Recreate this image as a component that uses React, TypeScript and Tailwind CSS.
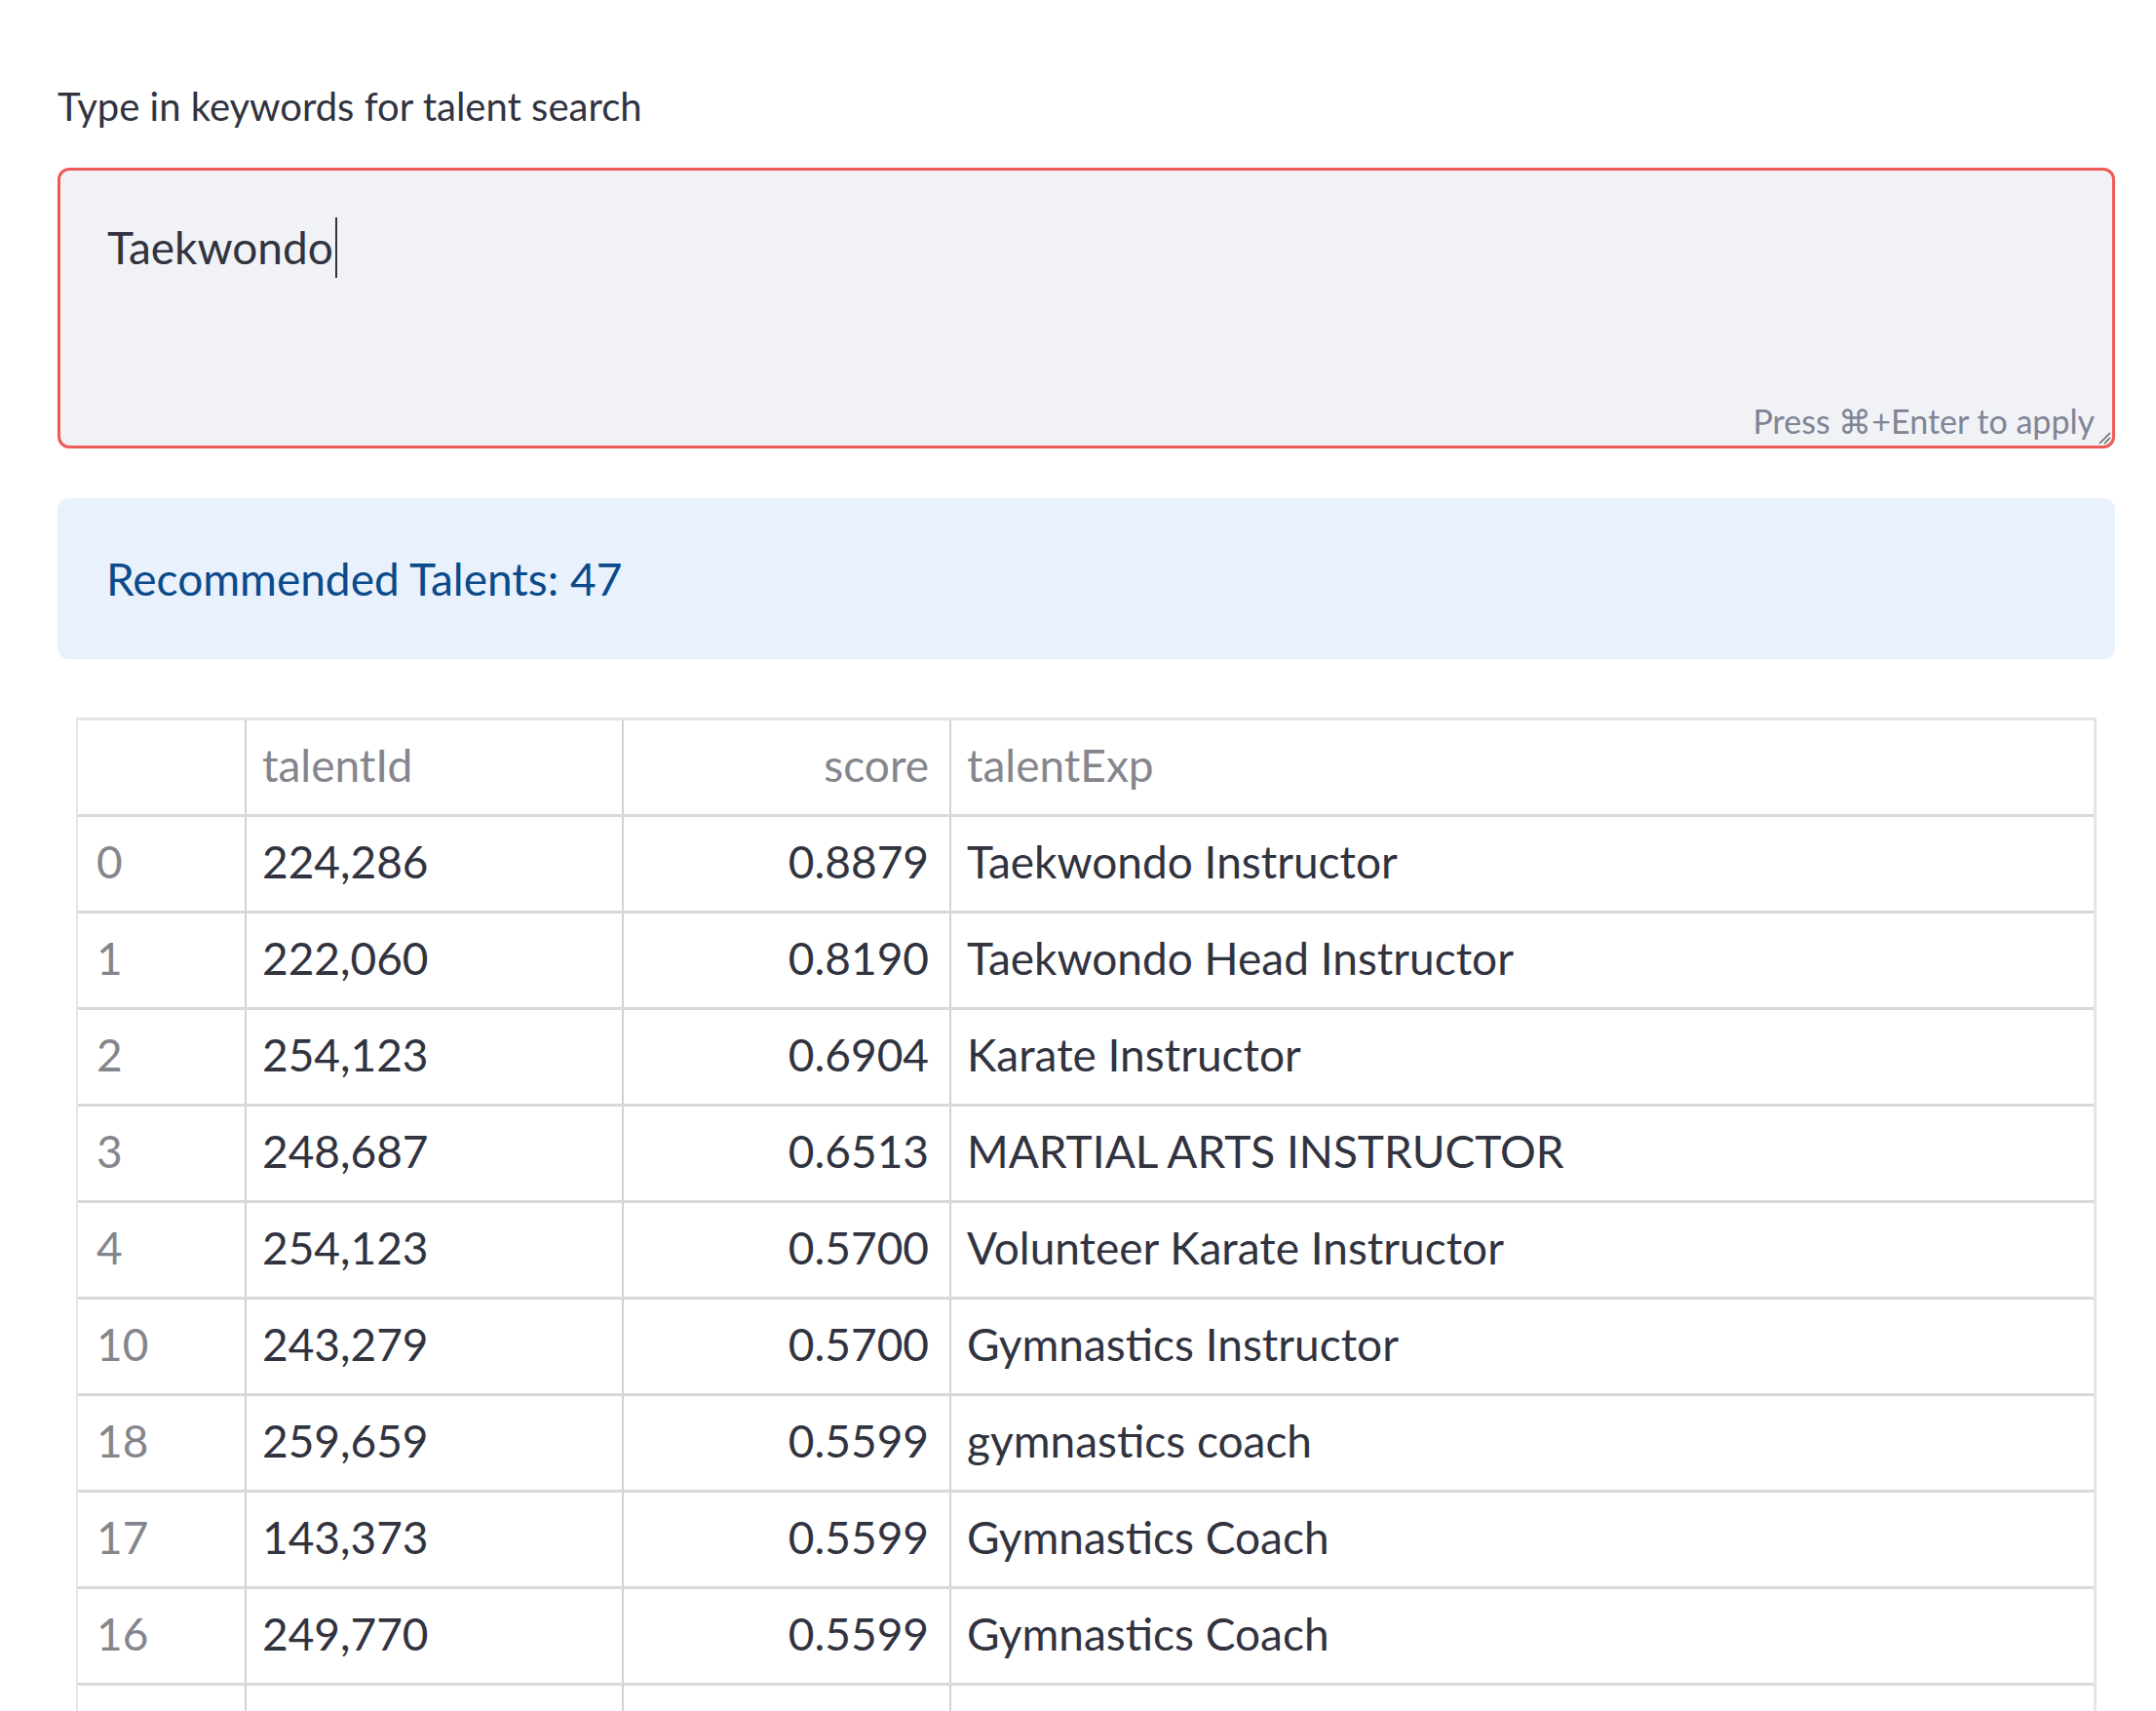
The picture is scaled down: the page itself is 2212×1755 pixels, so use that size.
const rows: [string, string, string, string][] = [
  ['0', '224,286', '0.8879', 'Taekwondo Instructor'],
  ['1', '222,060', '0.8190', 'Taekwondo Head Instructor'],
  ['2', '254,123', '0.6904', 'Karate Instructor'],
  ['3', '248,687', '0.6513', 'MARTIAL ARTS INSTRUCTOR'],
  ['4', '254,123', '0.5700', 'Volunteer Karate Instructor'],
  ['10', '243,279', '0.5700', 'Gymnastics Instructor'],
  ['18', '259,659', '0.5599', 'gymnastics coach'],
  ['17', '143,373', '0.5599', 'Gymnastics Coach'],
  ['16', '249,770', '0.5599', 'Gymnastics Coach'],
  // next row only shows its top edge at the bottom of the viewport
  ['', '', '', ''],
];

const cols = 'grid grid-cols-[171px_387px_336px_1fr]';

export default function App() {
  return (
    <div className="w-[2212px] min-h-[1755px] bg-white text-[#31333f] font-['Lato','Noto_Sans',sans-serif]">
      <div className="pl-[59px] pr-[42px] pt-[79px]">
        {/* Label */}
        <div className="h-[60px] text-[40px] leading-[60px]">Type in keywords for talent search</div>

        {/* Text area */}
        <div className="relative mt-[33px] h-[288px] rounded-[12px] border-[3px] border-[#ee5a55] bg-[#f0f2f6] pl-[48px] pt-[46px]">
          <div className="flex items-center text-[46px] leading-[66px]">
            <span>Taekwondo</span>
            <span className="ml-[2px] h-[62px] w-[2px] bg-[#31333f]" />
          </div>
          <div className="absolute bottom-[0px] right-[18px] text-[34px] leading-[50px] text-[#808495]">
            Press ⌘+Enter to apply
          </div>
          <svg className="absolute bottom-[1px] right-[1px]" width="14" height="14" viewBox="0 0 14 14">
            <path d="M2 13 L13 2 M7 13 L13 7" stroke="#6b6b6b" strokeWidth="1.6" />
          </svg>
        </div>

        {/* Info box */}
        <div className="mt-[51px] flex h-[165px] items-center rounded-[12px] bg-[#e8f1fc] pl-[50px] text-[46px] text-[#0b4a8b]">
          Recommended Talents: 47
        </div>

        {/* Table */}
        <div className="mx-[19px] mt-[60px] border-t-[3px] border-r-[3px] border-l-[2px] border-[#e6e6e6]">
          <div className={`${cols} h-[99px] border-b-[3px] border-[#d9d9d9] text-[46px] text-[#85868d]`}>
            <div className="flex items-center pb-[6px] pl-[20px]" />
            <div className="flex items-center border-l-[2px] border-[#d2d2d2] pb-[6px] pl-[16px]">talentId</div>
            <div className="flex items-center justify-end border-l-[2px] border-[#d2d2d2] pb-[6px] pr-[21px]">score</div>
            <div className="flex items-center border-l-[2px] border-[#d2d2d2] pb-[6px] pl-[16px]">talentExp</div>
          </div>
          {rows.map((r, i) => (
            <div key={i} className={`${cols} h-[99px] border-b-[3px] border-[#d9d9d9] text-[46px]`}>
              <div className="flex items-center pb-[6px] pl-[19px] text-[#85868d]">{r[0]}</div>
              <div className="flex items-center border-l-[2px] border-[#d2d2d2] pb-[6px] pl-[16px]">{r[1]}</div>
              <div className="flex items-center justify-end border-l-[2px] border-[#d2d2d2] pb-[6px] pr-[21px]">{r[2]}</div>
              <div className="flex items-center border-l-[2px] border-[#d2d2d2] pb-[6px] pl-[16px]">{r[3]}</div>
            </div>
          ))}
        </div>
      </div>
    </div>
  );
}
